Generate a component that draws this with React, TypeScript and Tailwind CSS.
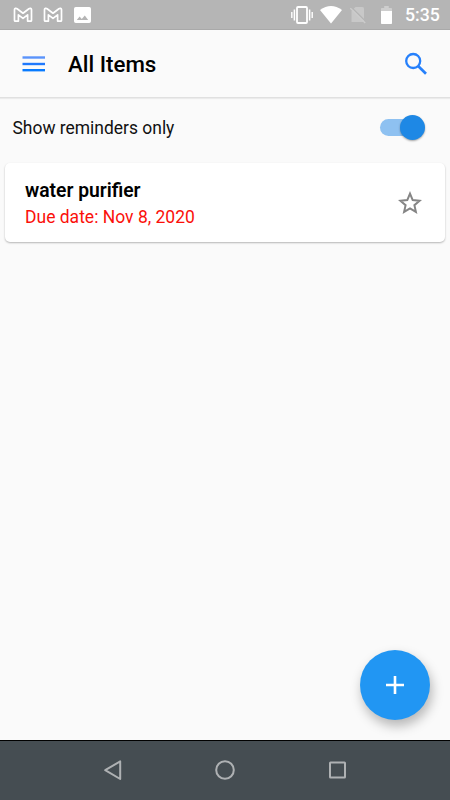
import { ReactNode, useState } from 'react';

function MailIcon() {
  return (
    <svg width="20" height="16" viewBox="0 0 20 16" fill="none" stroke="white" strokeWidth="1.7" strokeLinejoin="round">
      <path d="M1.5 2.5V13.4Q1.5 14.1 2.3 14.1H5.4V7.8L10 11.4L14.6 7.8V14.1H17.7Q18.5 14.1 18.5 13.4V2.5C18.5 1.3 17 .9 15.9 1.7L10 6.2L4.1 1.7C3 .9 1.5 1.3 1.5 2.5Z" />
    </svg>
  );
}

function StatusBar() {
  return (
    <div className="flex h-[30px] items-center border-b border-[#a9a9a9] bg-[#b5b5b5] pl-[13px] pr-[10px] pt-px text-white">
      <MailIcon />
      <div className="ml-[10px]">
        <MailIcon />
      </div>
      <svg className="ml-[11px]" width="17" height="16" viewBox="0 0 17 16" fill="white">
        <path
          fillRule="evenodd"
          d="M1.8 0H15.2Q17 0 17 1.8V14.2Q17 16 15.2 16H1.8Q0 16 0 14.2V1.8Q0 0 1.8 0ZM2.8 13H14.2L10.8 8.4L7.8 12L5.6 9.5Z"
        />
      </svg>
      <div className="ml-auto flex items-center">
        <svg width="22" height="18" viewBox="0 0 22 18" fill="none" stroke="white">
          <rect x="6" y="1" width="10" height="16" rx="1" strokeWidth="1.8" />
          <path d="M3.4 3.5V14.5M18.6 3.5V14.5" strokeWidth="1.5" />
          <path d="M.8 6V12M21.2 6V12" strokeWidth="1.4" />
        </svg>
        <svg className="ml-[7px]" width="22" height="18" viewBox="0 0 22 18" fill="white">
          <path d="M0 4Q11 -4 22 4L11 17.5Z" />
        </svg>
        <svg className="ml-2" width="16" height="18" viewBox="0 0 16 18">
          <path d="M5.5 1H12.5Q14 1 14 2.5V16H1.5V5Z" fill="#c8c8c8" />
          <path d="M1.6 1.4L16 15.8" stroke="#b5b5b5" strokeWidth="1.4" />
          <path d="M.4 2.2L15.2 17" stroke="#cccccc" strokeWidth="1.4" />
        </svg>
        <svg className="ml-[15px]" width="11" height="18" viewBox="0 0 11 18">
          <path d="M3.2 0H7.8V2H10.2Q11 2 11 2.8V5H0V2.8Q0 2 .8 2H3.2Z" fill="#cecece" />
          <path d="M0 5H11V17.2Q11 18 10.2 18H.8Q0 18 0 17.2Z" fill="white" />
        </svg>
        <span className="ml-[13px] w-[35px] whitespace-nowrap pt-[2px] text-[17.7px] font-medium leading-none">5:35</span>
      </div>
    </div>
  );
}

function AppBar() {
  return (
    <header className="flex h-[68px] items-center border-b border-[#e0e0e0] pl-[22px] pr-[22px] shadow-[0_1px_1px_rgba(0,0,0,0.06)]">
      <button type="button" aria-label="Menu">
        <svg width="23" height="16" viewBox="0 0 23 16">
          <path d="M.5 1.5H23" stroke="#5a93fb" strokeWidth="2.4" />
          <path d="M.5 8H23" stroke="#2079fc" strokeWidth="2.4" />
          <path d="M.5 14.2H23" stroke="#087bff" strokeWidth="2.4" />
        </svg>
      </button>
      <h1 className="ml-[23px] pt-[2px] text-[22.3px] font-medium leading-none text-black">All Items</h1>
      <button type="button" aria-label="Search" className="ml-auto">
        <svg width="24" height="24" viewBox="0 0 24 24" fill="none" stroke="#2680fb">
          <circle cx="9.2" cy="9" r="7" strokeWidth="2.3" />
          <path d="M14.1 14L22 21.8" strokeWidth="2.7" />
        </svg>
      </button>
    </header>
  );
}

type SwitchProps = {
  checked: boolean;
  onChange: () => void;
};

function ReminderSwitch({ checked, onChange }: SwitchProps) {
  return (
    <button
      type="button"
      role="switch"
      aria-checked={checked}
      aria-label="Show reminders only"
      onClick={onChange}
      className="flex h-[25px] w-[45px] items-center"
    >
      <span className="h-[17px] w-10 shrink-0 rounded-full bg-[#8ec1f1]" />
      <span
        className={
          checked
            ? '-ml-5 size-[25px] shrink-0 rounded-full bg-[#1e88e5] shadow-[0_1px_2px_rgba(0,0,0,0.35)]'
            : '-ml-10 size-[25px] shrink-0 rounded-full bg-white shadow-[0_1px_2px_rgba(0,0,0,0.35)]'
        }
      />
    </button>
  );
}

type ItemCardProps = {
  title: string;
  children: ReactNode;
};

function ItemCard({ title, children }: ItemCardProps) {
  return (
    <article className="mx-[5px] flex h-[79px] items-center rounded-[5px] bg-white pl-5 pr-[23px] shadow-[0_1px_2px_rgba(0,0,0,0.28)]">
      <div className="flex flex-col gap-1 pt-[2px]">
        <h2 className="text-[19.3px] font-semibold leading-[22px] text-black">{title}</h2>
        <p className="text-[17.5px] leading-[22px] text-[#fb100a]">{children}</p>
      </div>
      <button type="button" aria-label="Favorite" className="ml-auto">
        <svg width="24" height="24" viewBox="0 0 24 24" fill="none" stroke="#858585" strokeWidth="2">
          <path d="M12 2.6L14.7 9.1L21.6 9.7L16.4 14.2L17.9 20.9L12 17.4L6.1 20.9L7.6 14.2L2.4 9.7L9.3 9.1Z" />
        </svg>
      </button>
    </article>
  );
}

function NavigationBar() {
  return (
    <nav className="flex h-[60px] items-center justify-center gap-[88px] border-t border-black bg-[#454d52]">
      <svg width="24" height="24" viewBox="0 0 24 24" fill="none" stroke="#aeb1b3" strokeWidth="2" strokeLinejoin="round">
        <path d="M19.2 2.4V20L4.2 11.2Z" />
      </svg>
      <svg width="24" height="24" viewBox="0 0 24 24" fill="none" stroke="#aeb1b3" strokeWidth="2">
        <circle cx="12" cy="11" r="8.8" />
      </svg>
      <svg width="24" height="24" viewBox="0 0 24 24" fill="none" stroke="#aeb1b3" strokeWidth="2">
        <rect x="5" y="3.5" width="15" height="15" rx=".5" />
      </svg>
    </nav>
  );
}

export default function App() {
  const [remindersOnly, setRemindersOnly] = useState(true);

  return (
    <div className="flex h-[800px] w-[450px] flex-col overflow-hidden bg-[#fafafa] font-['Roboto',sans-serif]">
      <StatusBar />
      <AppBar />
      <main className="flex min-h-0 flex-1 flex-col">
        <div className="flex h-[65px] items-center justify-between pb-[6px] pl-[12.5px] pr-[25px]">
          <span className="pt-[2px] text-[17.45px] leading-none text-[#111]">Show reminders only</span>
          <ReminderSwitch checked={remindersOnly} onChange={() => setRemindersOnly(!remindersOnly)} />
        </div>
        <ItemCard title="water purifier">Due date: Nov 8, 2020</ItemCard>
        <button
          type="button"
          aria-label="Add item"
          className="mb-5 ml-auto mr-5 mt-auto flex size-[70px] items-center justify-center rounded-full bg-[#2196f3] shadow-[2px_6px_12px_rgba(0,0,0,0.28)]"
        >
          <svg width="18" height="18" viewBox="0 0 18 18" stroke="white" strokeWidth="2.6">
            <path d="M0 9H18M9 0V18" />
          </svg>
        </button>
      </main>
      <NavigationBar />
    </div>
  );
}
